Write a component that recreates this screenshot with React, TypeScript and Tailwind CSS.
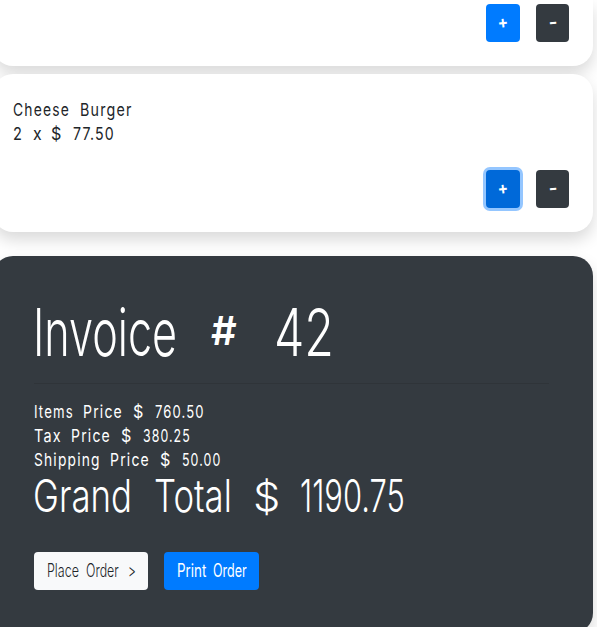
import { useLayoutEffect, useRef, useState } from 'react';
import type { ReactNode } from 'react';

type WordProps = { children: string; width: number; gap?: number; className?: string };

// A word condensed or stretched to an exact advance width.
function Word({ children, width, gap = 0, className = '' }: WordProps) {
  const ref = useRef<HTMLSpanElement>(null);
  const [scale, setScale] = useState(1);
  useLayoutEffect(() => {
    if (ref.current) setScale(width / ref.current.offsetWidth);
  }, [width]);
  return (
    <span className="inline-block shrink-0 whitespace-nowrap" style={{ width, marginLeft: gap }}>
      <span ref={ref} className={`inline-block origin-left ${className}`} style={{ transform: `scaleX(${scale})` }}>
        {children}
      </span>
    </span>
  );
}

function Row({ children, className = '' }: { children: ReactNode; className?: string }) {
  return <div className={`flex ${className}`}>{children}</div>;
}

function Quantity({ focused = false }: { focused?: boolean }) {
  return (
    <div className="flex justify-end gap-4 pr-6">
      <button
        className={`flex h-[38px] w-[34px] items-center justify-center rounded text-[17px] font-bold text-white ${
          focused ? 'bg-[#0069d9] shadow-[0_0_0_3px_#94c6ff]' : 'bg-[#007bff]'
        }`}
      >
        <span className="-rotate-6 scale-x-90">+</span>
      </button>
      <button className="flex h-[38px] w-[33px] items-center justify-center rounded bg-[#343a40] text-[17px] font-bold text-white">
        <span className="-rotate-6 scale-x-110">-</span>
      </button>
    </div>
  );
}

export default function App() {
  return (
    <div className="h-[627px] w-[597px] overflow-hidden bg-white font-['Inter','Open_Sans',sans-serif] text-[#212529]">
      <div className="-ml-[7px] w-[600px]">
        <section className="h-[66px] rounded-b-[20px] bg-white pt-1 shadow-[0_8px_16px_rgba(0,0,0,0.15)]">
          <Quantity />
        </section>

        <section className="mt-2 h-[158px] rounded-[20px] bg-white pt-6 shadow-[0_8px_16px_rgba(0,0,0,0.15)]">
          <div className="pl-5 text-[17.5px] leading-6 tracking-[1.5px]">
            <Row>
              <Word width={57}>Cheese</Word>
              <Word width={53} gap={10}>Burger</Word>
            </Row>
            <Row>
              <Word width={10}>2</Word>
              <Word width={10} gap={10}>x</Word>
              <Word width={12} gap={8}>$</Word>
              <Word width={42} gap={10}>77.50</Word>
            </Row>
          </div>
          <div className="mt-6">
            <Quantity focused />
          </div>
        </section>

        <section className="mt-6 h-[377px] rounded-[20px] bg-[#343a40] pr-10 pl-10 text-white shadow-[0_8px_16px_rgba(0,0,0,0.15)]">
          <Row className="h-[127px] pt-[36px] text-[66px] leading-[80px] font-[350]">
            <Word width={144}>Invoice</Word>
            <Word width={26} gap={34} className="relative -top-[11px] text-[40px] font-semibold">#</Word>
            <Word width={60} gap={37}>42</Word>
          </Row>
          <div className="mr-[4px] ml-px border-t border-[#2f3439]" />
          <div className="ml-px pt-4 text-[17.5px] leading-6 tracking-[1.5px]">
            <Row>
              <Word width={40}>Items</Word>
              <Word width={40} gap={9}>Price</Word>
              <Word width={12} gap={10}>$</Word>
              <Word width={50} gap={10}>760.50</Word>
            </Row>
            <Row>
              <Word width={28}>Tax</Word>
              <Word width={40} gap={9}>Price</Word>
              <Word width={12} gap={10}>$</Word>
              <Word width={48} gap={10}>380.25</Word>
            </Row>
            <Row>
              <Word width={67}>Shipping</Word>
              <Word width={40} gap={9}>Price</Word>
              <Word width={12} gap={10}>$</Word>
              <Word width={39} gap={10}>50.00</Word>
            </Row>
          </div>
          <Row className="h-20 text-[45px] leading-[48px] font-[350]">
            <Word width={99}>Grand</Word>
            <Word width={78} gap={22}>Total</Word>
            <Word width={27} gap={21} className="relative -top-px text-[40px]">$</Word>
            <Word width={105} gap={20}>1190.75</Word>
          </Row>
          <div className="ml-px flex gap-4 text-[18px] leading-[38px]">
            <button className="flex h-[38px] w-[114px] rounded bg-[#f8f9fa] pl-[13px] font-light text-[#212529]">
              <Word width={32}>Place</Word>
              <Word width={33} gap={7}>Order</Word>
              <Word width={8} gap={9}>&gt;</Word>
            </button>
            <button className="flex h-[38px] w-[95px] rounded bg-[#007bff] pl-[13px] text-white">
              <Word width={29}>Print</Word>
              <Word width={34} gap={7}>Order</Word>
            </button>
          </div>
        </section>
      </div>
    </div>
  );
}
